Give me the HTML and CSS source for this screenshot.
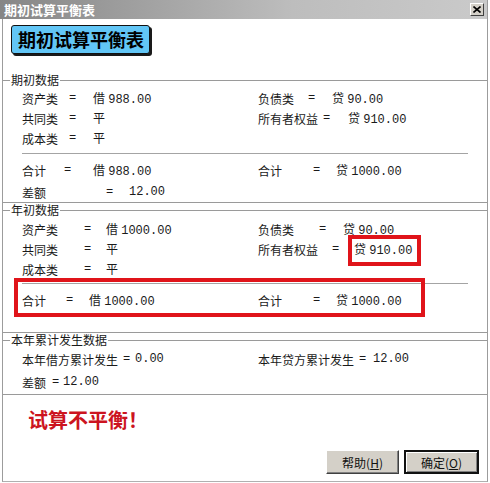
FILE: index.html
```html
<!DOCTYPE html>
<html lang="zh-CN">
<head>
    <meta charset="UTF-8">
    <title>期初试算平衡表</title>
    <link rel="stylesheet" href="styles.css">
</head>
<body>
    <div class="window">
        <div class="titlebar">
            <span>期初试算平衡表</span>
            <span class="close">
                <svg width="8" height="7" viewBox="0 0 8 7"><path d="M0.5 0.5 L7.5 6.5 M7.5 0.5 L0.5 6.5" stroke="#000" stroke-width="1.6"/></svg>
            </span>
        </div>

        <div class="heading">期初试算平衡表</div>

        <fieldset class="box box-first">
            <legend>期初数据</legend>
            <div class="grid">
                <div class="cell"><span class="k k46">资产类</span><span class="eq e24">=</span><span class="v">借 988.00</span></div>
                <div class="cell"><span class="k k49">负债类</span><span class="eq e24">=</span><span class="v">贷 90.00</span></div>
                <div class="cell"><span class="k k46">共同类</span><span class="eq e24">=</span><span class="v">平</span></div>
                <div class="cell"><span class="k k64">所有者权益</span><span class="eq e25">=</span><span class="v">贷 910.00</span></div>
                <div class="cell"><span class="k k46">成本类</span><span class="eq e24">=</span><span class="v">平</span></div>
                <div class="cell"></div>
            </div>
            <div class="sep"></div>
            <div class="grid">
                <div class="cell"><span class="k k41">合计</span><span class="eq e29">=</span><span class="v">借 988.00</span></div>
                <div class="cell"><span class="k k54">合计</span><span class="eq e23">=</span><span class="v">贷 1000.00</span></div>
            </div>
            <div class="grid row-gap">
                <div class="cell"><span class="k k83">差额</span><span class="eq e23">=</span><span class="v">12.00</span></div>
            </div>
        </fieldset>

        <fieldset class="box box-second">
            <legend>年初数据</legend>
            <div class="grid">
                <div class="cell"><span class="k k61">资产类</span><span class="eq e22">=</span><span class="v">借 1000.00</span></div>
                <div class="cell"><span class="k k60">负债类</span><span class="eq e24">=</span><span class="v">贷 90.00</span></div>
                <div class="cell"><span class="k k61">共同类</span><span class="eq e22">=</span><span class="v">平</span></div>
                <div class="cell"><span class="k k73">所有者权益</span><span class="eq e22">=</span><span class="v boxed">贷 910.00</span></div>
                <div class="cell"><span class="k k61">成本类</span><span class="eq e22">=</span><span class="v">平</span></div>
                <div class="cell"></div>
            </div>
            <div class="marked">
                <div class="sep"></div>
                <div class="grid">
                    <div class="cell"><span class="k k43">合计</span><span class="eq e23">=</span><span class="v">借 1000.00</span></div>
                    <div class="cell"><span class="k k54">合计</span><span class="eq e23">=</span><span class="v">贷 1000.00</span></div>
                </div>
                <div class="mark"></div>
            </div>
        </fieldset>

        <fieldset class="box box-third">
            <legend>本年累计发生数据</legend>
            <div class="grid">
                <div class="cell"><span class="k k100">本年借方累计发生</span><span class="eq e12">=</span><span class="v">0.00</span></div>
                <div class="cell"><span class="k k100">本年贷方累计发生</span><span class="eq e14">=</span><span class="v">12.00</span></div>
            </div>
            <div class="grid row-gap">
                <div class="cell"><span class="k k29">差额</span><span class="eq e11">=</span><span class="v">12.00</span></div>
            </div>
        </fieldset>

        <div class="warn">试算不平衡！</div>

        <div class="buttons">
            <button class="btn">帮助(<u>H</u>)</button>
            <button class="btn btn-default">确定(<u>O</u>)</button>
        </div>
    </div>
</body>
</html>
```

FILE: styles.css
```css
body {
    margin: 0;
    background: #fff;
    font-family: "Liberation Mono", "Noto Sans CJK SC", monospace;
    font-size: 12px;
    color: #1a1a1a;
}

.window {
    box-sizing: border-box;
    width: 486px;
    height: 482px;
    margin-left: 2px;
    border-left: 1px solid #9c9c9c;
    border-right: 1px solid #9c9c9c;
    border-bottom: 1px solid #b0b0b0;
    display: flex;
    flex-direction: column;
}

.titlebar {
    height: 19px;
    margin-left: -3px;
    padding: 0 3px 0 4px;
    background: linear-gradient(to right, #868686, #bdbdbd 60%, #cacaca);
    color: #fff;
    font-family: "Noto Sans CJK SC", sans-serif;
    font-weight: bold;
    font-size: 13px;
    line-height: 19px;
    display: flex;
    align-items: center;
    justify-content: space-between;
}

.close {
    box-sizing: border-box;
    width: 14px;
    height: 13px;
    background: #d4d0c8;
    border: 1px solid;
    border-color: #fff #404040 #404040 #fff;
    display: flex;
    align-items: center;
    justify-content: center;
}

.heading {
    align-self: flex-start;
    margin: 6px 0 0 8px;
    height: 27px;
    padding: 0 5px 0 6px;
    background: #62c6f6;
    border: 1px solid #111;
    border-radius: 3px;
    box-shadow: 2px 2px 0 #1a1a1a;
    font-family: "Noto Sans CJK SC", sans-serif;
    font-weight: bold;
    font-size: 18px;
    line-height: 27px;
    color: #000;
}

.box {
    margin: 0;
    padding: 0 0 0 19px;
    min-width: 0;
    border: 0;
    border-top: 1px solid #9a9a9a;
    border-bottom: 1px solid #9a9a9a;
}

.box legend {
    margin-left: -12px;
    padding: 0 1px;
    line-height: 14px;
    font-family: "Noto Sans CJK SC", sans-serif;
}

.box-first {
    margin-top: 19px;
    padding-top: 1px;
}

.box-second {
    padding-top: 2px;
    padding-bottom: 22px;
}

.box-third {
    padding-top: 2px;
    padding-bottom: 2px;
}

.grid {
    display: grid;
    grid-template-columns: 236px 1fr;
    grid-auto-rows: 20px;
    align-items: center;
}

.row-gap { margin-top: 2px; }

.box-third .row-gap { margin-top: 3px; }

.cell {
    display: flex;
    align-items: center;
    white-space: nowrap;
}

.k { font-family: "Noto Sans CJK SC", sans-serif; }
.eq { padding-left: 1px; }
.v { word-spacing: -4px; }

.k29 { width: 29px; }
.k41 { width: 41px; }
.k43 { width: 43px; }
.k46 { width: 46px; }
.k49 { width: 49px; }
.k54 { width: 54px; }
.k60 { width: 60px; }
.k61 { width: 61px; }
.k64 { width: 64px; }
.k73 { width: 73px; }
.k83 { width: 83px; }
.k100 { width: 100px; }

.e11 { width: 11px; }
.e12 { width: 12px; }
.e14 { width: 14px; }
.e22 { width: 22px; }
.e23 { width: 23px; }
.e24 { width: 24px; }
.e25 { width: 25px; }
.e29 { width: 29px; }

.sep {
    height: 0;
    margin: 5px 19px 5px 0;
    border-top: 1px solid #a4a4a4;
    border-bottom: 1px solid #fff;
}

.box-second .sep { margin-top: 4px; }

.marked { position: relative; }

.mark {
    position: absolute;
    left: -8px;
    top: -5px;
    width: 411px;
    height: 39px;
    box-sizing: border-box;
    border: 4px solid #e0141a;
}

.boxed { position: relative; }

.boxed::after {
    content: "";
    position: absolute;
    left: -6px;
    right: -9px;
    top: -5px;
    bottom: -8px;
    border: 4px solid #e0141a;
}

.warn {
    margin: 13px 0 0 25px;
    line-height: 24px;
    font-family: "Noto Sans CJK SC", sans-serif;
    font-weight: bold;
    font-size: 20px;
    color: #cc1420;
}

.buttons {
    margin-top: auto;
    padding: 0 8px 7px 0;
    display: flex;
    justify-content: flex-end;
    gap: 5px;
}

.btn {
    box-sizing: border-box;
    width: 73px;
    height: 24px;
    padding: 0;
    background: #d4d0c8;
    border: 1px solid;
    border-color: #fff #404040 #404040 #fff;
    box-shadow: inset -1px -1px 0 #808080;
    font-family: "Noto Sans CJK SC", sans-serif;
    font-size: 12px;
    color: #111;
}

.btn-default {
    width: 75px;
    border: 2px solid #111;
    box-shadow: inset 1px 1px 0 #fff, inset -1px -1px 0 #808080;
}
```
